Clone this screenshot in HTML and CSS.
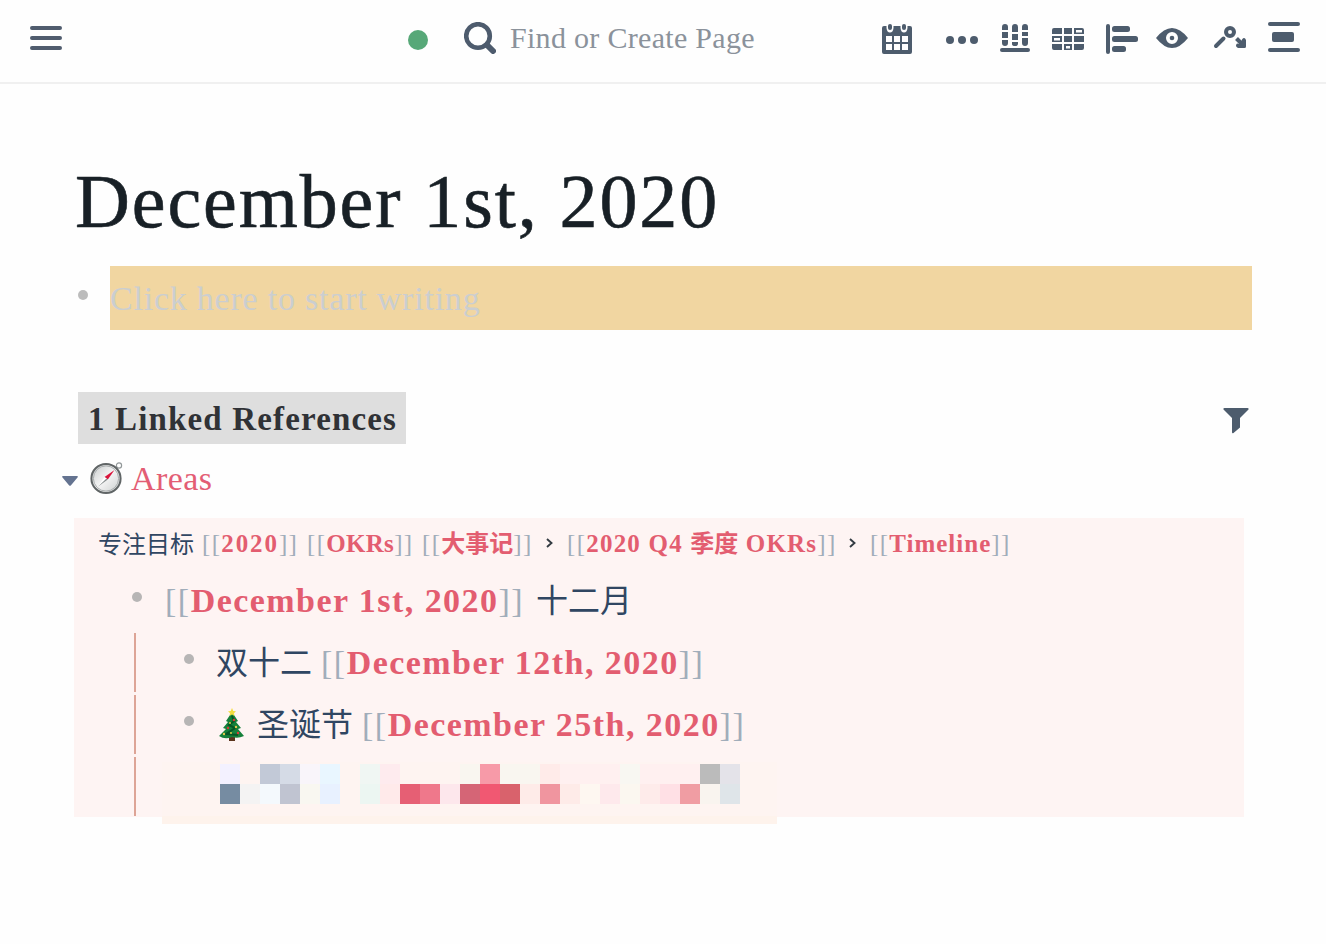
FILE: index.html
```
<!DOCTYPE html>
<html lang="zh-CN">
<head>
<meta charset="utf-8">
<title>December 1st, 2020</title>
<link rel="stylesheet" href="styles.css">
</head>
<body>
<header class="topbar">
  <svg class="menu" width="32" height="26" viewBox="0 0 32 26"><path d="M2 3H30M2 13H30M2 23H30" stroke="#505c6e" stroke-width="4" stroke-linecap="round"/></svg>
  <span class="status"></span>
  <svg class="search-icon" width="32" height="32" viewBox="0 0 32 32" fill="none" stroke="#4d5b6d"><circle cx="14" cy="14" r="11.800" stroke-width="4.600"/><path d="M23 23L29 29" stroke-width="6" stroke-linecap="round"/></svg>
  <span class="search">Find or Create Page</span>
  <svg class="tools" width="460" height="82" viewBox="866 0 460 82" fill="#4d5c6d">
    <path fill-rule="evenodd" d="M884 26H886.500V28Q887 32.500 890 32.500T893.500 28V26H900.500V28Q901 32.500 904 32.500T907.500 28V26H910Q912 26 912 28V52Q912 54 910 54H884Q882 54 882 52V28Q882 26 884 26ZM886 36V42H892V36ZM894 36V42H900V36ZM902 36V42H908V36ZM886 44V50H892V44ZM894 44V50H900V44ZM902 44V50H908V44Z"/>
    <rect x="888" y="24" width="4" height="6" rx="2"/><rect x="902" y="24" width="4" height="6" rx="2"/>
    <circle cx="950" cy="40" r="4"/><circle cx="962" cy="40" r="4"/><circle cx="974" cy="40" r="4"/>
    <path d="M1002 30V27Q1002 24 1005 24T1008 27V30ZM1012 32V27Q1012 24 1015 24T1018 27V32ZM1022 30V27Q1022 24 1025 24T1028 27V30ZM1002 32H1008V38H1002ZM1012 34H1018V40H1012ZM1022 32H1028V36H1022ZM1002 40H1008V43Q1008 46 1005 46T1002 43ZM1012 42H1018V44Q1018 46 1015 46T1012 44ZM1022 38H1028V43Q1028 46 1025 46T1022 43Z"/>
    <rect x="1000" y="48" width="30" height="4" rx="2"/>
    <path fill-rule="evenodd" d="M1054 28H1062V34H1052V30Q1052 28 1054 28ZM1064 28H1072V34H1064ZM1074 28H1082Q1084 28 1084 30V34H1074ZM1076 30V32.500H1082V30ZM1052 36H1062V42H1052ZM1054 38V40.500H1060V38ZM1064 36H1072V42H1064ZM1074 36H1084V42H1074ZM1052 44H1062V50H1054Q1052 50 1052 48ZM1064 44H1072V50H1064ZM1066 46V48.500H1070V46ZM1074 44H1084V48Q1084 50 1082 50H1074Z"/>
    <rect x="1106" y="24" width="4" height="30" rx="2"/><rect x="1112" y="26" width="18" height="6" rx="2.500"/><rect x="1112" y="36" width="26" height="6" rx="2.500"/><rect x="1112" y="46" width="14" height="6" rx="2.500"/>
    <path fill-rule="evenodd" d="M1156 38Q1164 28 1172 28T1188 38Q1180 48 1172 48T1156 38ZM1172 32A6 6 0 1 0 1172 44A6 6 0 1 0 1172 32Z"/><circle cx="1172" cy="38" r="2.300"/>
    <g fill="none" stroke="#4d5c6d" stroke-width="4"><circle cx="1230" cy="32" r="4"/><path d="M1216 46L1223.500 38.500" stroke-linecap="round"/><path d="M1236.500 38.500L1243 45"/></g>
    <path d="M1246 40V46.500Q1246 48 1244.500 48H1238Q1234.500 46 1237 43.500L1240 44L1242 39.500Q1244.500 36.500 1246 40Z"/>
    <rect x="1268" y="22" width="32" height="4" rx="2"/><rect x="1272" y="32" width="22" height="10" rx="2"/><rect x="1268" y="48" width="32" height="4" rx="2"/>
  </svg>
</header>
<main class="page">
  <h1 class="title">December 1st, 2020</h1>
  <div class="editor"><span class="dot"></span><div class="placeholder">Click here to start writing</div></div>
  <div class="refs-head"><h2 class="refs-title">1 Linked References</h2>
    <svg class="filter" width="26" height="26" viewBox="0 0 26 26" fill="#4d5c6d"><path d="M1.500 0H24.500Q26.500 .5 25 2L17 10V19.500L10.500 25Q9 26 9 24V10L1 2Q-.5 .5 1.500 0Z"/></svg>
  </div>
  <div class="source">
    <svg class="caret" width="16" height="10" viewBox="0 0 16 10"><path d="M1 0H15Q16.500 .5 15.500 1.500L8.800 9.500Q8 10.200 7.200 9.500L.5 1.500Q-.5 .5 1 0Z" fill="#647390"/></svg>
    <svg class="compass" width="34" height="34" viewBox="0 0 34 34">
      <defs><linearGradient id="face" x2="1" y2="1"><stop stop-color="#c5c9ca"/><stop offset=".5" stop-color="#f4f4f4"/><stop offset="1" stop-color="#c8cccc"/></linearGradient></defs>
      <circle cx="29" cy="4.500" r="2.600" fill="#fff" stroke="#929899" stroke-width="1.200"/>
      <circle cx="16" cy="17.500" r="14.600" fill="url(#face)" stroke="#606566" stroke-width="2"/><circle cx="16" cy="17.500" r="12.600" fill="none" stroke="#a9adae"/>
      <path d="M24.500 9L17.800 18.500L14.500 16Z" fill="#d9153c"/><path d="M7.500 26L14.500 16L17.800 18.500Z" fill="#fff"/><path d="M7.500 26L17.800 18.500L16.500 17.500Z" fill="#858b8c"/>
    </svg>
    <span class="source-link">Areas</span>
  </div>
  <section class="panel">
    <div class="crumbs">
      <span class="cjk crumb-lead">专注目标</span>
      <span class="crumb w105"><i>[[</i><b class="year">2020</b><i>]]</i></span>
      <span class="crumb w115"><i>[[</i><b class="okrs">OKRs</b><i>]]</i></span>
      <span class="crumb w122"><i>[[</i><b class="cjk">大事记</b><i>]]</i></span>
      <svg class="chevron" width="7" height="10" viewBox="0 0 7 10"><path d="M1 1L5.500 5L1 9" fill="none" stroke="#333b42" stroke-width="1.900"/></svg>
      <span class="crumb w279"><i>[[</i><b class="quarter">2020 Q4 <span class="cjk">季度</span> OKRs</b><i>]]</i></span>
      <svg class="chevron" width="7" height="10" viewBox="0 0 7 10"><path d="M1 1L5.500 5L1 9" fill="none" stroke="#333b42" stroke-width="1.900"/></svg>
      <span class="crumb"><i>[[</i><b class="timeline">Timeline</b><i>]]</i></span>
    </div>
    <div class="block"><span class="dot"></span><span class="text"><i>[[</i><b>December 1st, 2020</b><i>]]</i><span class="cjk after">十二月</span></span></div>
    <div class="children">
      <div class="block"><span class="dot"></span><span class="text"><span class="cjk before">双十二</span><i>[[</i><b class="wide">December 12th, 2020</b><i>]]</i></span></div>
      <div class="block"><span class="dot"></span><span class="text">
        <svg class="tree" width="32" height="34" viewBox="0 0 32 34">
          <path d="M13 26H19V33H13Z" fill="#5b341d"/><path d="M16 4L22 13L20 14L25 20L22 21L28 28Q22 31 16 29Q9 32 3 28L10 21L7 20L12 14L10 13Z" fill="#16803b"/>
          <path d="M16 8L18 13L13 17L19 20L10 26L22 27" fill="none" stroke="#075625" stroke-width="2"/>
          <path d="M16 0L17.300 3L20 3.300L18 5.200L18.500 8L16 6.500L13.500 8L14 5.200L12 3.300L14.700 3Z" fill="#f4dd42"/>
          <g fill="#d93d36"><circle cx="18" cy="12" r="1.200"/><circle cx="12" cy="20" r="1.200"/><circle cx="22" cy="25" r="1.200"/></g><g fill="#e2ca4a"><circle cx="14" cy="15" r="1"/><circle cx="20" cy="19" r="1.200"/><circle cx="8" cy="26" r="1.200"/><circle cx="15" cy="25" r="1"/></g>
        </svg>
        <span class="cjk before">圣诞节</span><i>[[</i><b class="wide">December 25th, 2020</b><i>]]</i></span></div>
      <div class="block">
        <svg class="mosaic" width="615" height="62" viewBox="162 762 615 62" shape-rendering="crispEdges"><path fill="#fef4f1" d="M162 762H777V824H162Z"/><path fill="#fef3ec" d="M162 816H777V824H162Z"/>
          <path fill="#f3f1ff" d="M220 764h20v20h-20z"/><path fill="#c2c9d7" d="M260 764h20v20h-20z"/><path fill="#d5dbe6" d="M280 764h20v20h-20z"/><path fill="#f9f5fa" d="M300 764h20v20h-20z"/><path fill="#e9f6ff" d="M320 764h20v20h-20z"/><path fill="#f0f6f3" d="M360 764h20v20h-20z"/><path fill="#feebee" d="M380 764h20v20h-20z"/><path fill="#f9f6f0" d="M460 764h80v20h-80z"/><path fill="#f79aa8" d="M480 764h20v20h-20z"/><path fill="#ffebe9" d="M540 764h20v20h-20z"/><path fill="#fff0f0" d="M560 764h60v20h-60zM640 764h60v20h-60z"/><path fill="#f8f7f2" d="M620 764h20v20h-20z"/><path fill="#bbb" d="M700 764h20v20h-20z"/><path fill="#e4e3e9" d="M720 764h20v20h-20z"/>
          <path fill="#768ca2" d="M220 784h20v20h-20z"/><path fill="#f4f3f3" d="M240 784h20v20h-20z"/><path fill="#f4f9fd" d="M260 784h20v20h-20z"/><path fill="#c0c4d1" d="M280 784h20v20h-20z"/><path fill="#f9f7f1" d="M300 784h20v20h-20z"/><path fill="#e8f1ff" d="M320 784h20v20h-20z"/><path fill="#ecf6f2" d="M360 784h20v20h-20z"/><path fill="#ffeaea" d="M380 784h20v20h-20z"/><path fill="#e65f74" d="M400 784h20v20h-20z"/><path fill="#ef788b" d="M420 784h20v20h-20z"/><path fill="#fde7ec" d="M440 784h20v20h-20z"/><path fill="#d56576" d="M460 784h20v20h-20z"/><path fill="#f15872" d="M480 784h20v20h-20z"/><path fill="#d9626c" d="M500 784h20v20h-20z"/><path fill="#feebe8" d="M520 784h20v20h-20zM560 784h20v20h-20z"/><path fill="#f0959f" d="M540 784h20v20h-20z"/><path fill="#fef7f1" d="M580 784h20v20h-20z"/><path fill="#fee9ec" d="M600 784h20v20h-20z"/><path fill="#fbf7f0" d="M620 784h20v20h-20z"/><path fill="#feebea" d="M640 784h20v20h-20z"/><path fill="#ffe0e5" d="M660 784h20v20h-20z"/><path fill="#f09da3" d="M680 784h20v20h-20z"/><path fill="#f9f4ef" d="M700 784h20v20h-20z"/><path fill="#dfe5e9" d="M720 784h20v20h-20z"/>
        </svg>
      </div>
    </div>
  </section>
</main>
</body>
</html>
```
FILE: styles.css
```
* { box-sizing: border-box; }
body { margin: 0; background: #fefefe; font-family: "Liberation Serif", "Noto Sans CJK SC", serif; height: 944px; overflow: hidden; }
svg { display: block; flex: none; }
.topbar { height: 84px; border-bottom: 2px solid #f0f0f0; display: flex; align-items: flex-start; padding-left: 30px; }
.menu { margin-top: 25px; }
.status { width: 20px; height: 20px; border-radius: 50%; background: #57a878; margin: 30px 0 0 346px; flex: none; }
.search-icon { margin: 22px 0 0 36px; }
.search { width: 356px; flex: none; padding-left: 14px; line-height: 34px; margin-top: 21px; font-size: 30px; letter-spacing: .3px; color: #8b929b; white-space: nowrap; }
.tools { margin-left: 14px; }
.page { padding: 82px 74px 0 74px; }
.title { margin: 0 0 0 1px; height: 100px; line-height: 70px; font-size: 76px; font-weight: 400; letter-spacing: 1.900px; color: #182026; white-space: nowrap; -webkit-text-stroke: .6px #182026; }
.editor { display: flex; height: 64px; padding-left: 4px; }
.dot { width: 10px; height: 10px; border-radius: 50%; background: #b7b5b5; flex: none; }
.editor .dot { margin: 24px 22px 0 0; background: #bcbcbc; }
.placeholder { width: 1142px; height: 64px; background: #f1d6a1; color: #cbced0; font-size: 34px; line-height: 66px; letter-spacing: .780px; white-space: nowrap; }
.refs-head { display: flex; margin-top: 62px; height: 52px; justify-content: space-between; padding: 0 3px 0 4px; }
.refs-title { margin: 0; width: 328px; height: 52px; padding-left: 10px; background: #dedede; color: #303236; font-size: 33px; line-height: 54px; letter-spacing: 1.150px; white-space: nowrap; }
.filter { margin-top: 16px; }
.source { display: flex; height: 74px; margin-left: -12px; }
.caret { margin-top: 32px; }
.compass { margin: 17px 0 0 12px; }
.source-link { margin-left: 7px; line-height: 70px; color: #e35d74; font-size: 34px; letter-spacing: .4px; }
.panel { width: 1170px; height: 299px; background: #fef4f3; }
i { font-style: normal; color: #a1adba; }
b { color: #e35d70; }
.cjk { font-family: "Noto Sans CJK SC", sans-serif; color: #304662; letter-spacing: 0; }
b.cjk, b .cjk { color: #e35d70; }
.crumbs { display: flex; height: 52px; padding-left: 24px; line-height: 52px; font-size: 25px; white-space: nowrap; }
.crumbs i { letter-spacing: 1.300px; }
.crumbs .cjk { font-size: 24px; line-height: 1; }
.crumbs .crumb-lead { width: 104px; line-height: 49px; }
.crumb { flex: none; }
.w105 { width: 105px; }
.w115 { width: 115px; }
.w122 { width: 124px; }
.w279 { width: 282px; }
.year { letter-spacing: 1.900px; }
.okrs { letter-spacing: .3px; }
.quarter { letter-spacing: 1.200px; }
.timeline { letter-spacing: 1px; }
.chevron { margin: 20px 14px 0 0; }
.block { display: flex; height: 62px; position: relative; }
.panel > .block { padding-left: 58px; }
.block .dot { margin: 22px 23px 0 0; }
.text { display: flex; line-height: 62px; font-size: 34px; white-space: nowrap; }
.text i { letter-spacing: 1.500px; }
.text b { letter-spacing: 1.450px; }
.text b.wide { letter-spacing: 1.450px; }
.text .cjk { font-size: 32px; line-height: 56px; }
.after { margin-left: 12px; }
.before { margin-right: 9px; }
.children .block { margin-left: 60px; padding-left: 50px; }
.children .block .text { margin-left: -1px; }
.children .block::before { content: ""; position: absolute; left: 0; top: 1px; width: 2px; height: 59px; background: #dda496; }
.tree { margin: 14px 9px 0 0; }
.mosaic { position: absolute; left: 28px; top: 6px; }
```
